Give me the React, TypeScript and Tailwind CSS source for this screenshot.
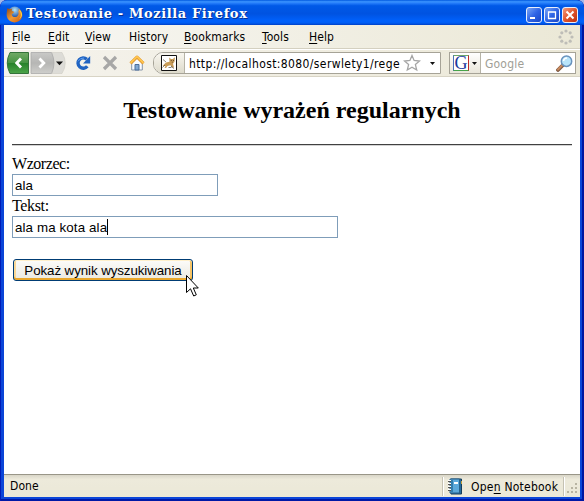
import type { ReactNode } from "react";

const ui = "font-['DejaVu_Sans_Condensed','DejaVu_Sans',sans-serif] font-stretch-condensed";

function MenuItem({ label, hot, width }: { label: string; hot: number; width: string }) {
  return (
    <span className={`shrink-0 whitespace-nowrap ${width}`}>
      {label.slice(0, hot)}
      <span className="underline decoration-1 underline-offset-2">{label[hot]}</span>
      {label.slice(hot + 1)}
    </span>
  );
}

function CaptionButton({ children, color }: { children: ReactNode; color: string }) {
  return (
    <div className={`flex h-4 w-4 items-center justify-center rounded-[3px] border border-[#e8effc] bg-linear-to-br ${color}`}>
      <svg width="14" height="14" viewBox="0 0 14 14" className="shrink-0" fill="none" stroke="white">{children}</svg>
    </div>
  );
}

function FirefoxLogo() {
  return (
    <svg width="17" height="17" viewBox="0 0 17 17" className="shrink-0">
      <defs>
        <radialGradient id="globe" cx=".5" cy=".25">
          <stop offset="0" stopColor="#b4e6fa" />
          <stop offset="1" stopColor="#2757a8" />
        </radialGradient>
        <linearGradient id="fox" x1="0" y1="0" x2="1" y2="1">
          <stop offset="0" stopColor="#8a4a20" />
          <stop offset=".5" stopColor="#f19a34" />
          <stop offset="1" stopColor="#c9560f" />
        </linearGradient>
      </defs>
      <circle cx="8.7" cy="7.5" r="7" fill="url(#globe)" />
      <path d="M1.2 2.2 3.7 3 6 2.7 5.8 4.7 8.4 5.9 6.8 7.4 5.7 8.2C6 11 9.2 12 11.3 10.2c1.7-1.5 1.6-3.8.5-5.7l1.3.5-.6-2.3c3.7 2.1 4.6 6.2 3.1 9.4-1.5 3.2-4.3 4.4-7.3 4.3C3.4 16.2.6 12.5.6 8.6Z" fill="url(#fox)" />
      <path d="M12.8 3.4c2.7 3.2 2.8 7.3.1 9.8 4.4-2.4 3.800-7.5-.1-9.800Z" fill="#ffdc45" />
    </svg>
  );
}

function NavButtons() {
  return (
    <svg width="60" height="24" viewBox="0 0 60 24" className="shrink-0">
      <defs>
        <linearGradient id="green" x1="0" y1="0" x2="0" y2="1">
          <stop offset="0" stopColor="#71aa66" /><stop offset=".48" stopColor="#479443" />
          <stop offset=".5" stopColor="#268129" /><stop offset="1" stopColor="#4da549" />
        </linearGradient>
        <linearGradient id="gray" x1="0" y1="0" x2="0" y2="1">
          <stop offset="0" stopColor="#c9c9c7" /><stop offset=".5" stopColor="#b6b6b4" /><stop offset="1" stopColor="#cececb" />
        </linearGradient>
      </defs>
      <path d="M46 1.500h10Q62.500 12 56 22.500H46Z" fill="#dddcd7" stroke="#cfcdc5" strokeWidth=".6" />
      <path d="M25 1.500h20.500Q50.500 12 45.500 22.500h-20.500Z" fill="url(#gray)" stroke="#aaa" strokeWidth=".8" />
      <path d="M4 1.500h18.500v21H4Q-1.500 12 4 1.500Z" fill="url(#green)" stroke="#34733a" />
      <path d="m15 7.500-4.300 4.500 4.300 4.500M33.500 7.500l4.300 4.500-4.300 4.500" fill="none" stroke="#fff" strokeWidth="2.800" />
      <path d="M50 10.500h7l-3.500 3.700Z" fill="#111" />
    </svg>
  );
}

function ReloadIcon() {
  return (
    <svg width="16" height="16" viewBox="0 0 16 16" className="ml-[9px] shrink-0">
      <path d="M11.800 4.300A5.200 5.200 0 1 0 12.300 11.300" fill="none" stroke="#2164c2" strokeWidth="3.400" />
      <path d="M15.200 1v7.400H8Z" fill="#2164c2" />
      <path d="M3 6.300Q5 2.700 9 3" fill="none" stroke="#5d9df0" />
    </svg>
  );
}

function StopIcon() {
  return (
    <svg width="16" height="16" viewBox="0 0 16 16" className="ml-[11px] shrink-0">
      <path d="m2 2 12 12M14 2 2 14" stroke="#a7a7a6" strokeWidth="3.200" />
    </svg>
  );
}

function HomeIcon() {
  return (
    <svg width="16" height="16" viewBox="0 0 16 16" className="ml-[11px] shrink-0">
      <path d="M2.700 7.500 8 2.500l5.300 5V15H2.700Z" fill="#f8fbff" stroke="#8594a8" />
      <path d="M6 15V9.500h4V15Z" fill="#80a8d4" stroke="#4d6e9b" />
      <path d="m1.500 8.300 6.500-6.300 6.500 6.300" fill="none" stroke="#dc922d" strokeWidth="3" strokeLinejoin="round" />
      <path d="m1.500 8 6.500-6.300L14.500 8" fill="none" stroke="#ffc54d" strokeWidth="1.800" />
    </svg>
  );
}

function TomcatIcon() {
  return (
    <svg width="16" height="16" viewBox="0 0 16 16" className="shrink-0">
      <path d="M.5.5h15v15H.5Z" fill="white" stroke="#111" />
      <path d="M1.500 11 5 7.500l3.500-.7-.3-4.300L10 4h1.800L14 2.200l-.5 4.500-1.500 2 1 3.800h-1.800l-1.700-2.200-3 .7-1.500 2H3.500l1-2Z" fill="#c99d58" />
      <path d="M2 4.500 5 7m-3.500 5.500L4 10m6 1 3 2.500M7.500 12.500h3" fill="none" stroke="#575047" strokeWidth=".7" />
      <path d="M9.800 5.500h1m1.200 0h1M10.800 7.200h1" stroke="#554028" strokeWidth=".8" />
    </svg>
  );
}

function Throbber() {
  return (
    <svg width="16" height="16" viewBox="0 0 16 16" fill="#bebdb7">
      <circle cx="8" cy="2" r="1.600" /><circle cx="12.200" cy="3.800" r="1.600" /><circle cx="14" cy="8" r="1.600" /><circle cx="12.200" cy="12.200" r="1.600" />
      <circle cx="8" cy="14" r="1.600" /><circle cx="3.800" cy="12.200" r="1.600" /><circle cx="2" cy="8" r="1.600" /><circle cx="3.800" cy="3.800" r="1.600" />
    </svg>
  );
}

function Magnifier() {
  return (
    <svg width="17" height="17" viewBox="0 0 17 17" className="shrink-0">
      <path d="m2 15 5-5" stroke="#805b43" strokeWidth="3.800" strokeLinecap="round" />
      <path d="m2 14.500 4.500-4.500" stroke="#c98a5e" strokeWidth="2" strokeLinecap="round" />
      <circle cx="10.500" cy="6.200" r="5.200" fill="#b9e5fa" stroke="#6993bd" strokeWidth="1.500" />
      <path d="M7.500 6Q8 3 11 3" fill="none" stroke="#fff" strokeWidth="1.500" />
    </svg>
  );
}

function DropArrow() {
  return <svg width="5" height="3" viewBox="0 0 5 3" className="shrink-0"><path d="M0 0h5L2.500 3Z" fill="#111" /></svg>;
}

function Notebook() {
  return (
    <svg width="17" height="17" viewBox="0 0 17 17" className="shrink-0">
      <path d="M4 1h10.500v15H4Z" fill="#276c9d" stroke="#173e5a" />
      <path d="M3 1h9.500v14H3Z" fill="#5ca9da" stroke="#286189" />
      <path d="M4 2h2v12H4Z" fill="#327eae" />
      <path d="M7 4h4v2H7Z" fill="white" />
      <path d="M1 3.500h3m-3 3h3m-3 3h3m-3 3h3" stroke="#555" />
      <path d="M1 2.500h3m-3 3h3m-3 3h3m-3 3h3" stroke="#fff" />
      <path d="M14.500 3v3" stroke="#c5a23d" />
    </svg>
  );
}

export default function App() {
  return (
    <div className="h-[501px] w-[584px] overflow-hidden bg-[#a3b9e8]">
      <div className="relative flex h-[501px] w-[584px] flex-col overflow-hidden rounded-t-[7px] bg-[#0b45d8] text-[12px] text-black shadow-[inset_1px_0_#001bb8,inset_-2px_0_#0016a1,inset_0_-2px_#0018a6]">
        <header className="flex h-[25px] shrink-0 items-center rounded-t-[7px] bg-[linear-gradient(to_bottom,#0058df_0,#3b94ff_7%,#2078f8_14%,#0059e7_23%,#0053e1_55%,#0061fc_84%,#005df3_92%,#003fc5_100%)] pt-[3px] pl-[6px] pr-[6px]">
          <FirefoxLogo />
          <h1 className="ml-[3px] whitespace-nowrap font-['DejaVu_Serif',serif] text-[13px] leading-5 font-bold tracking-[0.6px] text-white [text-shadow:1px_1px_#063091]">Testowanie - Mozilla Firefox</h1>
          <div className="ml-auto flex gap-[2px] pt-px">
            <CaptionButton color="from-[#7ba4f5] via-[#2f65e6] to-[#1945c5]"><path d="M3 10h5" strokeWidth="2" /></CaptionButton>
            <CaptionButton color="from-[#7ba4f5] via-[#2f65e6] to-[#1945c5]"><path d="M3.500 4h7v6.500h-7ZM3 4h8" strokeWidth="1.300" /></CaptionButton>
            <CaptionButton color="from-[#f09a7c] via-[#df542c] to-[#bd2f0d]"><path d="m3.500 3.500 7 7m0-7-7 7" strokeWidth="2" /></CaptionButton>
          </div>
        </header>
        <div className="mx-1 flex h-[472px] flex-col overflow-hidden">
          <nav className={`flex h-[24px] shrink-0 items-center border-b border-[#d4d0c0] bg-linear-to-r from-[#f8f7f4] to-[#ebe8d6] pt-px pl-2 tracking-[0.1px] ${ui}`}>
            <MenuItem label="File" hot={0} width="w-9" />
            <MenuItem label="Edit" hot={0} width="w-[37px]" />
            <MenuItem label="View" hot={0} width="w-11" />
            <MenuItem label="History" hot={2} width="w-[55px]" />
            <MenuItem label="Bookmarks" hot={0} width="w-[78px]" />
            <MenuItem label="Tools" hot={0} width="w-[47px]" />
            <MenuItem label="Help" hot={0} width="w-10" />
            <div className="mr-[6px] ml-auto"><Throbber /></div>
          </nav>
          <div className="flex h-[28px] shrink-0 items-center border-t border-b border-t-white border-b-[#d8d4c5] bg-linear-to-r from-[#f5f3ed] to-[#ebe8d7] pl-[2px]">
            <NavButtons />
            <ReloadIcon /><StopIcon /><HomeIcon />
            <div className="ml-2 flex h-[22px] w-[288px] items-center rounded-l-[10px] border border-[#a6a397] bg-white">
              <div className="flex h-full w-[31px] shrink-0 items-center justify-center rounded-l-[9px] border-r border-[#b6b3a6] bg-linear-to-b from-[#f8f6ef] to-[#dedbcc]"><TomcatIcon /></div>
              <span className={`ml-1 w-[212px] shrink-0 overflow-hidden pt-px tracking-[0.39px] whitespace-nowrap ${ui}`}>http://localhost:8080/serwlety1/rege</span>
              <svg width="18" height="18" viewBox="0 0 18 18" className="ml-[2px] shrink-0"><path d="m9 1.500 2.100 5 5.400.5-4.100 3.600 1.300 5.400L9 13.200 4.300 16l1.300-5.400L1.500 7l5.400-.5Z" fill="#fff" stroke="#a5a5a5" strokeWidth="1.300" /></svg>
              <div className="ml-[9px]"><DropArrow /></div>
            </div>
            <div className="ml-2 flex h-[22px] w-[127px] items-center border border-[#a6a397] bg-white">
              <div className="flex h-full w-[31px] shrink-0 items-center border-r border-[#b6b3a6] bg-linear-to-b from-white to-[#e9e6da] pl-[3px]">
                <div className="flex h-4 w-4 items-center justify-center border border-t-[#6ca66b] border-r-[#bd2b29] border-b-[#47a44a] border-l-[#4c70bb] bg-white font-['Liberation_Serif',serif] text-[18px] leading-4 text-[#1c389d]">G</div>
                <div className="ml-[3px]"><DropArrow /></div>
              </div>
              <span className={`ml-1 w-[68px] shrink-0 pt-px tracking-[0.2px] text-[#a09e96] ${ui}`}>Google</span>
              <div className="ml-[3px]"><Magnifier /></div>
            </div>
          </div>
          <main className="flex h-[397px] shrink-0 flex-col bg-white px-2 font-['Liberation_Serif',serif] text-[16px] leading-[19px]">
            <h2 className="mt-[19px] h-7 text-center text-[24px] leading-7 font-bold">Testowanie wyrażeń regularnych</h2>
            <div className="mt-5 h-[2px] w-[560px] shrink-0 border-t border-b border-t-[#414141] border-b-[#d3d3d3]" />
            <label className="mt-2 h-5 tracking-[-0.45px]">Wzorzec:</label>
            <div className="h-[22px] w-[206px] border border-[#7f9db9] pt-px pl-[2px] font-['Liberation_Sans',sans-serif] text-[13.333px] leading-5 tracking-[0.12px]">ala</div>
            <label className="h-5 leading-5 tracking-[-0.35px]">Tekst:</label>
            <div className="flex h-[22px] w-[326px] items-center border border-[#7f9db9] pl-[2px] font-['Liberation_Sans',sans-serif] text-[13.333px] leading-5"><span className="w-[92px] pt-px tracking-[0.12px] whitespace-nowrap">ala ma kota ala</span><span className="h-4 w-px bg-black" /></div>
            <button className="mt-[21px] ml-px h-[22px] w-[180px] rounded-[3px] border border-[#003c74] bg-linear-to-b from-[#fcfcfa] to-[#eae8df] pt-px font-['Liberation_Sans',sans-serif] text-[13.333px] leading-[19px] tracking-[-0.08px] whitespace-nowrap shadow-[inset_0_1px_#fff0cb,inset_0_-2px_#e9a72b,inset_2px_0_#fad896,inset_-2px_0_#f5c366]">Pokaż wynik wyszukiwania</button>
          </main>
          <footer className={`flex h-[23px] shrink-0 items-center border-t border-[#999688] bg-[linear-gradient(to_bottom,#d9d6c8,#edeadb_20%,#ebe8d7)] ${ui}`}>
            <span className="ml-[6px] tracking-[0.1px]">Done</span>
            <div className="ml-auto flex h-[19px] w-[122px] items-center border-r border-l border-[#c5c2b3] pl-1 shadow-[inset_1px_0_white,1px_0_white]">
              <Notebook />
              <span className="ml-[7px] pt-px tracking-[0.23px] whitespace-nowrap">Ope<span className="underline decoration-1 underline-offset-2">n</span> Notebook</span>
            </div>
            <svg width="16" height="19" viewBox="0 0 16 19" fill="#b8b4a2"><path d="M11 6h2v2h-2ZM7 10h2v2H7Zm4 0h2v2h-2ZM3 14h2v2H3Zm4 0h2v2H7Zm4 0h2v2h-2Z" /></svg>
          </footer>
        </div>
        <svg width="14" height="23" viewBox="0 0 14 23" className="absolute top-[275px] left-[186px]">
          <path d="M.5.5v17L4.500 13.800l3.200 7.200 2.600-1.200L7.300 13h5Z" fill="white" stroke="black" />
        </svg>
      </div>
    </div>
  );
}
